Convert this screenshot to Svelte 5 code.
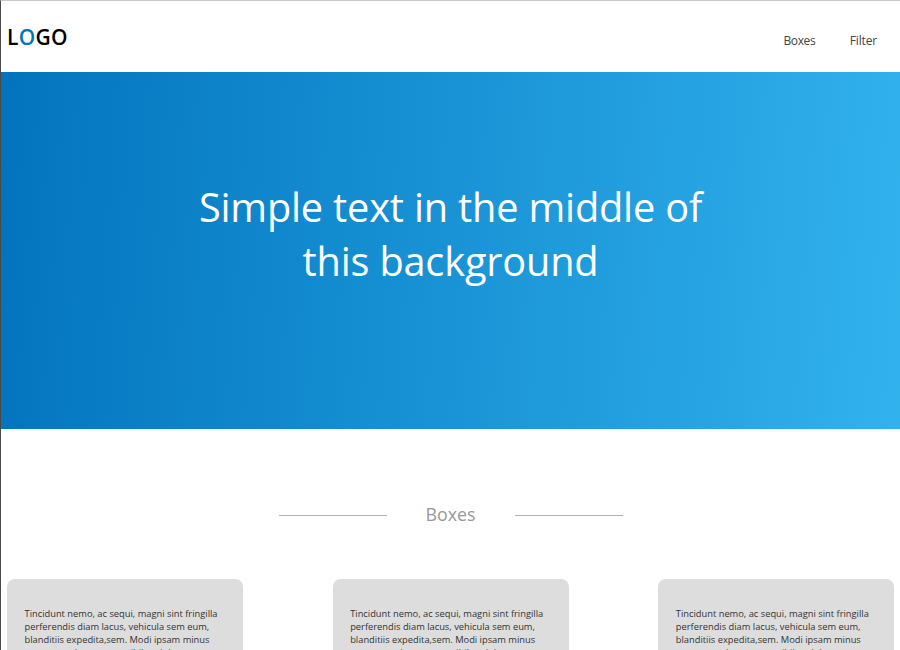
<script>
  const links = ['Boxes', 'Filter'];
  const lines = [
    'Tincidunt nemo, ac sequi, magni sint fringilla',
    'perferendis diam lacus, vehicula sem eum,',
    'blanditiis expedita,sem. Modi ipsam minus',
    'consequat, leo tempor nihil et dolorem cutent'
  ];
</script>

<div class="page">
  <header>
    <div class="logo">L<span>O</span>GO</div>
    <nav>
      {#each links as link}<a href="#{link.toLowerCase()}">{link}</a>{/each}
    </nav>
  </header>
  <section class="hero">
    <h1>Simple text in the middle of<br />this background</h1>
  </section>
  <section class="boxes" id="boxes">
    <div class="title"><i></i><h2>Boxes</h2><i></i></div>
    <div class="row">
      {#each [0, 1, 2] as box}
        <article>
          <p>{#each lines as line}{line}<br />{/each}</p>
        </article>
      {/each}
    </div>
  </section>
</div>

<style>
  :global(body) { margin: 0; overflow: hidden; }
  .page {
    box-sizing: border-box;
    width: 900px;
    height: 650px;
    overflow: hidden;
    border-left: 1px solid #4a4a4c;
    border-top: 1px solid #c8c8c8;
    background: #fff;
    font-family: "Open Sans", "Noto Sans", sans-serif;
    color: #333;
  }
  header {
    display: flex;
    justify-content: space-between;
    height: 71px;
    padding: 0 23px 0 6px;
    box-sizing: border-box;
  }
  .logo { font-size: 21px; line-height: 29px; font-weight: 600; letter-spacing: 0.3px; color: #000; padding-top: 22px; }
  .logo span { color: #0274be; }
  nav { display: flex; gap: 34.5px; padding-top: 31px; }
  nav a { font-size: 12px; letter-spacing: -0.4px; line-height: 17px; color: #444; text-decoration: none; }
  nav a:last-child { letter-spacing: -0.15px; }
  .hero {
    height: 357px;
    background: linear-gradient(94deg, #0274be, #31b2ed);
  }
  h1 {
    margin: 0;
    padding-top: 108px;
    text-align: center;
    color: #fff;
    font-size: 39.7px;
    letter-spacing: -0.17px;
    line-height: 54px;
    font-weight: 400;
  }
  .title { display: flex; justify-content: center; padding: 71px 0 0; height: 78px; }
  .title i { width: 108px; height: 1px; margin-top: 15px; background: #b0b0b0; }
  h2 { width: 128px; margin: 0; padding-top: 1px; box-sizing: border-box; text-align: center; font-size: 17.8px; line-height: 26px; font-weight: 400; color: #999; }
  .row { display: flex; justify-content: space-between; padding: 0.5px 5.7px 0 6px; }
  article {
    box-sizing: border-box;
    width: 236px;
    height: 200px;
    padding: 28.5px 0 0 17.5px;
    border-radius: 8px;
    background: #ddd;
  }
  p { margin: 0; font-size: 9.32px; line-height: 13px; white-space: nowrap; }
</style>
